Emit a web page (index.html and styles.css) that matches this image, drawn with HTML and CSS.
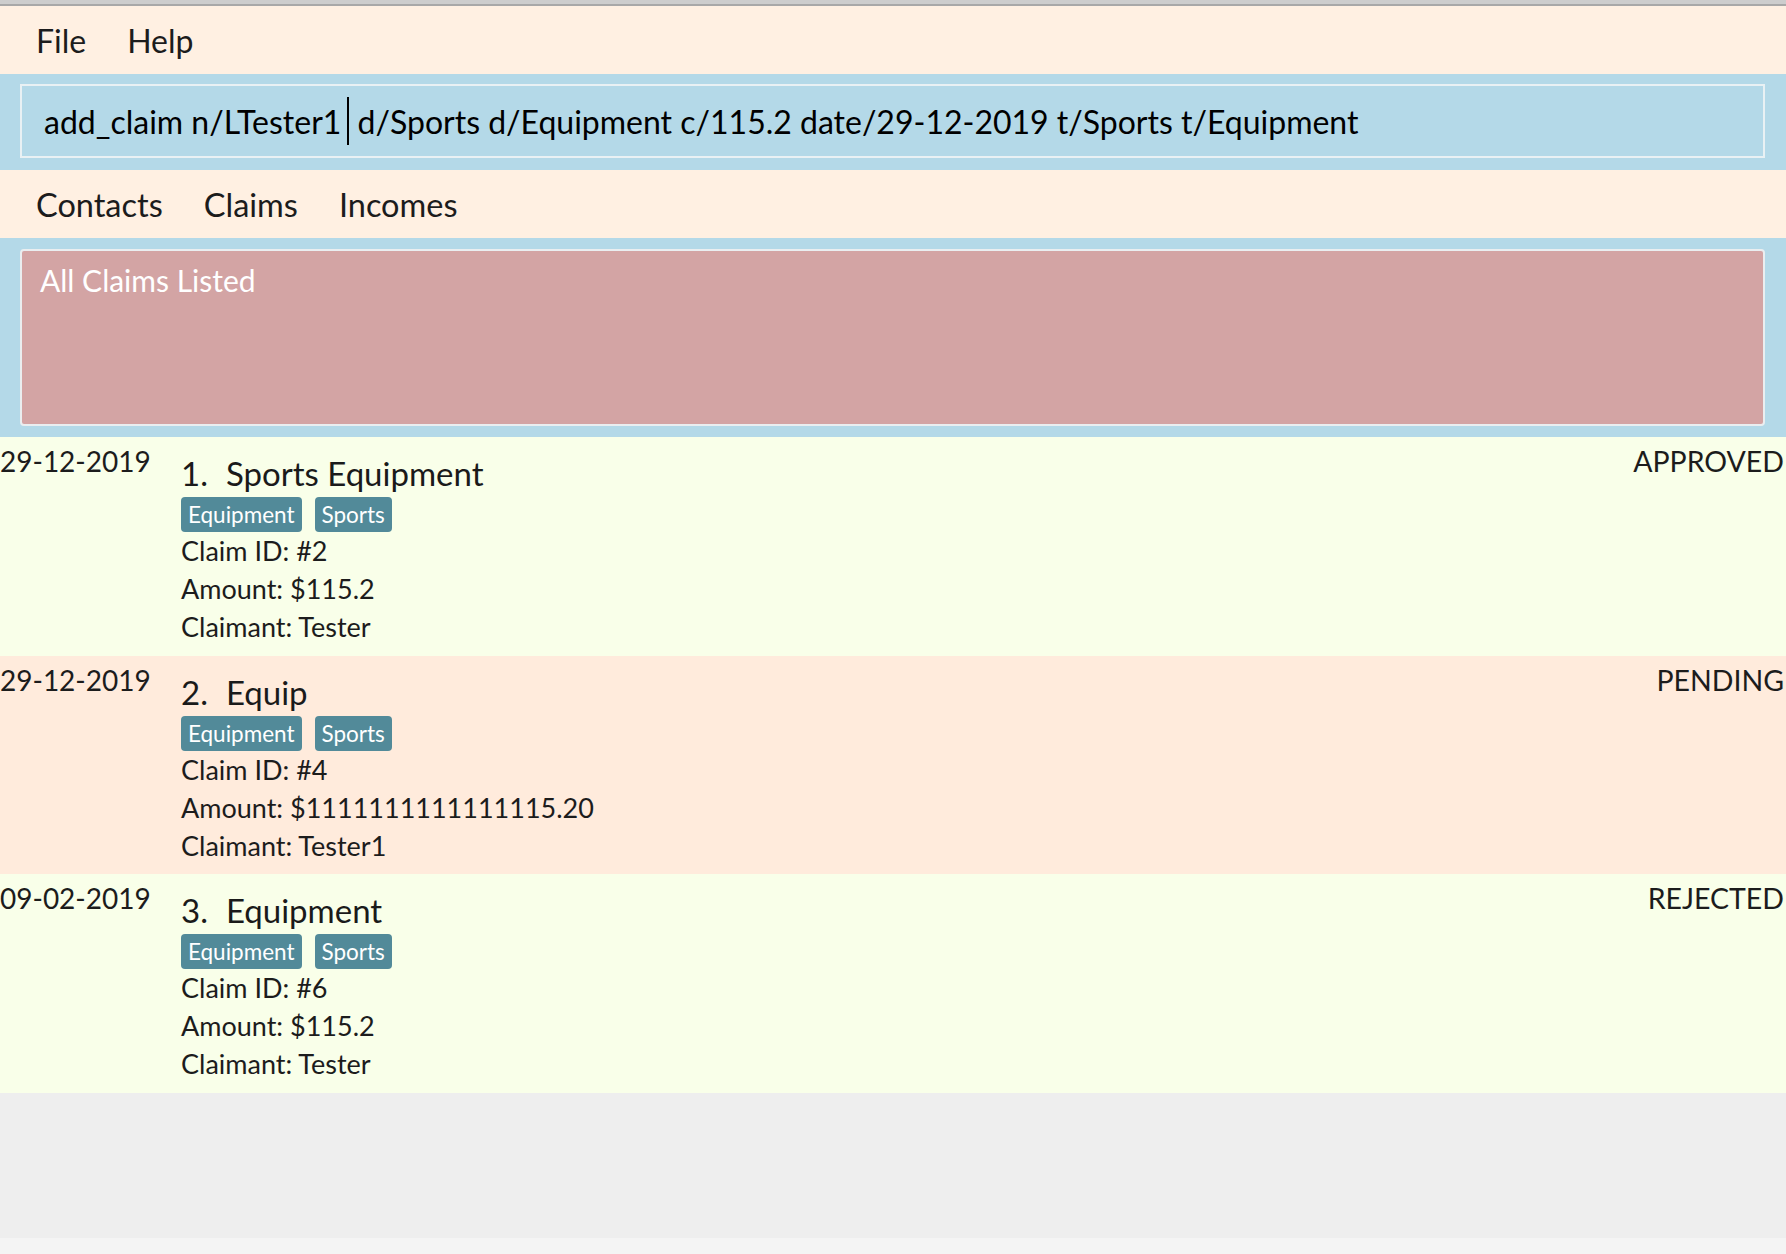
FILE: index.html
```html
<!DOCTYPE html>
<html lang="en">
<head>
<meta charset="utf-8">
<title>Claims</title>
<link rel="stylesheet" href="styles.css">
</head>
<body>
<div class="app">
  <div class="titlebar"></div>
  <nav class="menubar">
    <span class="menu-item">File</span>
    <span class="menu-item">Help</span>
  </nav>
  <div class="command-area">
    <div class="command-field">add_claim n/LTester1<span class="caret"></span> d/Sports d/Equipment c/115.2 date/29-12-2019 t/Sports t/Equipment</div>
  </div>
  <nav class="tabbar">
    <span class="tab">Contacts</span>
    <span class="tab">Claims</span>
    <span class="tab">Incomes</span>
  </nav>
  <div class="result-area">
    <div class="result-box">All Claims Listed</div>
  </div>
  <div class="list">
    <div class="claim odd">
      <div class="date">29-12-2019</div>
      <div class="details">
        <div class="title"><span class="idx">1.</span>Sports Equipment</div>
        <div class="tags"><span class="tag">Equipment</span><span class="tag">Sports</span></div>
        <div class="line">Claim ID: #2</div>
        <div class="line">Amount: $115.2</div>
        <div class="line">Claimant: Tester</div>
      </div>
      <div class="status">APPROVED</div>
    </div>
    <div class="claim even">
      <div class="date">29-12-2019</div>
      <div class="details">
        <div class="title"><span class="idx">2.</span>Equip</div>
        <div class="tags"><span class="tag">Equipment</span><span class="tag">Sports</span></div>
        <div class="line">Claim ID: #4</div>
        <div class="line">Amount: $1111111111111115.20</div>
        <div class="line">Claimant: Tester1</div>
      </div>
      <div class="status">PENDING</div>
    </div>
    <div class="claim odd">
      <div class="date">09-02-2019</div>
      <div class="details">
        <div class="title"><span class="idx">3.</span>Equipment</div>
        <div class="tags"><span class="tag">Equipment</span><span class="tag">Sports</span></div>
        <div class="line">Claim ID: #6</div>
        <div class="line">Amount: $115.2</div>
        <div class="line">Claimant: Tester</div>
      </div>
      <div class="status">REJECTED</div>
    </div>
    <div class="list-filler"></div>
  </div>
  <div class="footer"></div>
</div>
</body>
</html>
```

FILE: styles.css
```css
html, body {
  margin: 0;
  padding: 0;
}

body {
  font-family: Lato, "Open Sans", "Liberation Sans", sans-serif;
  color: #1c1c1c;
  background: #f4f4f4;
}

.app {
  display: flex;
  flex-direction: column;
  height: 1254px;
}

.titlebar {
  height: 4px;
  background: #cdcdcd;
  border-bottom: 2px solid #a8a8a8;
}

.menubar,
.tabbar {
  display: flex;
  align-items: center;
  gap: 41px;
  height: 68px;
  padding-left: 36px;
  background: #fff0e2;
  font-size: 32px;
}

.tabbar {
  font-size: 32.5px;
}

.command-area {
  background: #b4d9e8;
  padding: 10px 21px 12px 20px;
}

.command-field {
  box-sizing: border-box;
  height: 74px;
  border: 2px solid #e9f1f4;
  padding-left: 22px;
  display: flex;
  align-items: center;
  white-space: pre;
  font-size: 32px;
  color: #000;
}

.caret {
  display: inline-block;
  width: 2px;
  height: 48px;
  background: #000;
  margin: 0 0 0 6px;
}

.result-area {
  background: #b4d9e8;
  padding: 11px 21px 11px 20px;
}

.result-box {
  box-sizing: border-box;
  height: 177px;
  border: 2px solid #eaeef0;
  border-radius: 4px;
  background: #d3a4a4;
  color: #fff;
  font-size: 30px;
  padding: 11px 0 0 18px;
}

.list {
  flex: 1;
  display: flex;
  flex-direction: column;
  background: #eeeeee;
}

.claim {
  display: flex;
  align-items: flex-start;
  padding: 16px 2px 9.5px 0;
  font-size: 27px;
}

.claim.odd {
  background: #f9ffe9;
}

.claim.even {
  background: #ffebdc;
}

.date {
  width: 181px;
  flex-shrink: 0;
  font-size: 28px;
  line-height: 38px;
  margin-top: -11px;
}

.details {
  flex: 1;
}

.title {
  font-size: 33px;
  line-height: 40px;
  color: #1a1a1a;
}

.idx {
  display: inline-block;
  padding-right: 18px;
}

.tags {
  display: flex;
  gap: 13px;
  margin-top: 4px;
}

.tag {
  display: inline-flex;
  align-items: center;
  height: 35px;
  padding: 0 7px;
  border-radius: 4px;
  background: #528a99;
  color: #fff;
  font-size: 22.5px;
}

.line {
  line-height: 38px;
}

.status {
  font-size: 28.5px;
  line-height: 38px;
  margin-top: -11px;
}

.list-filler {
  flex: 1;
}

.footer {
  height: 16px;
  background: #f4f4f4;
}
```
